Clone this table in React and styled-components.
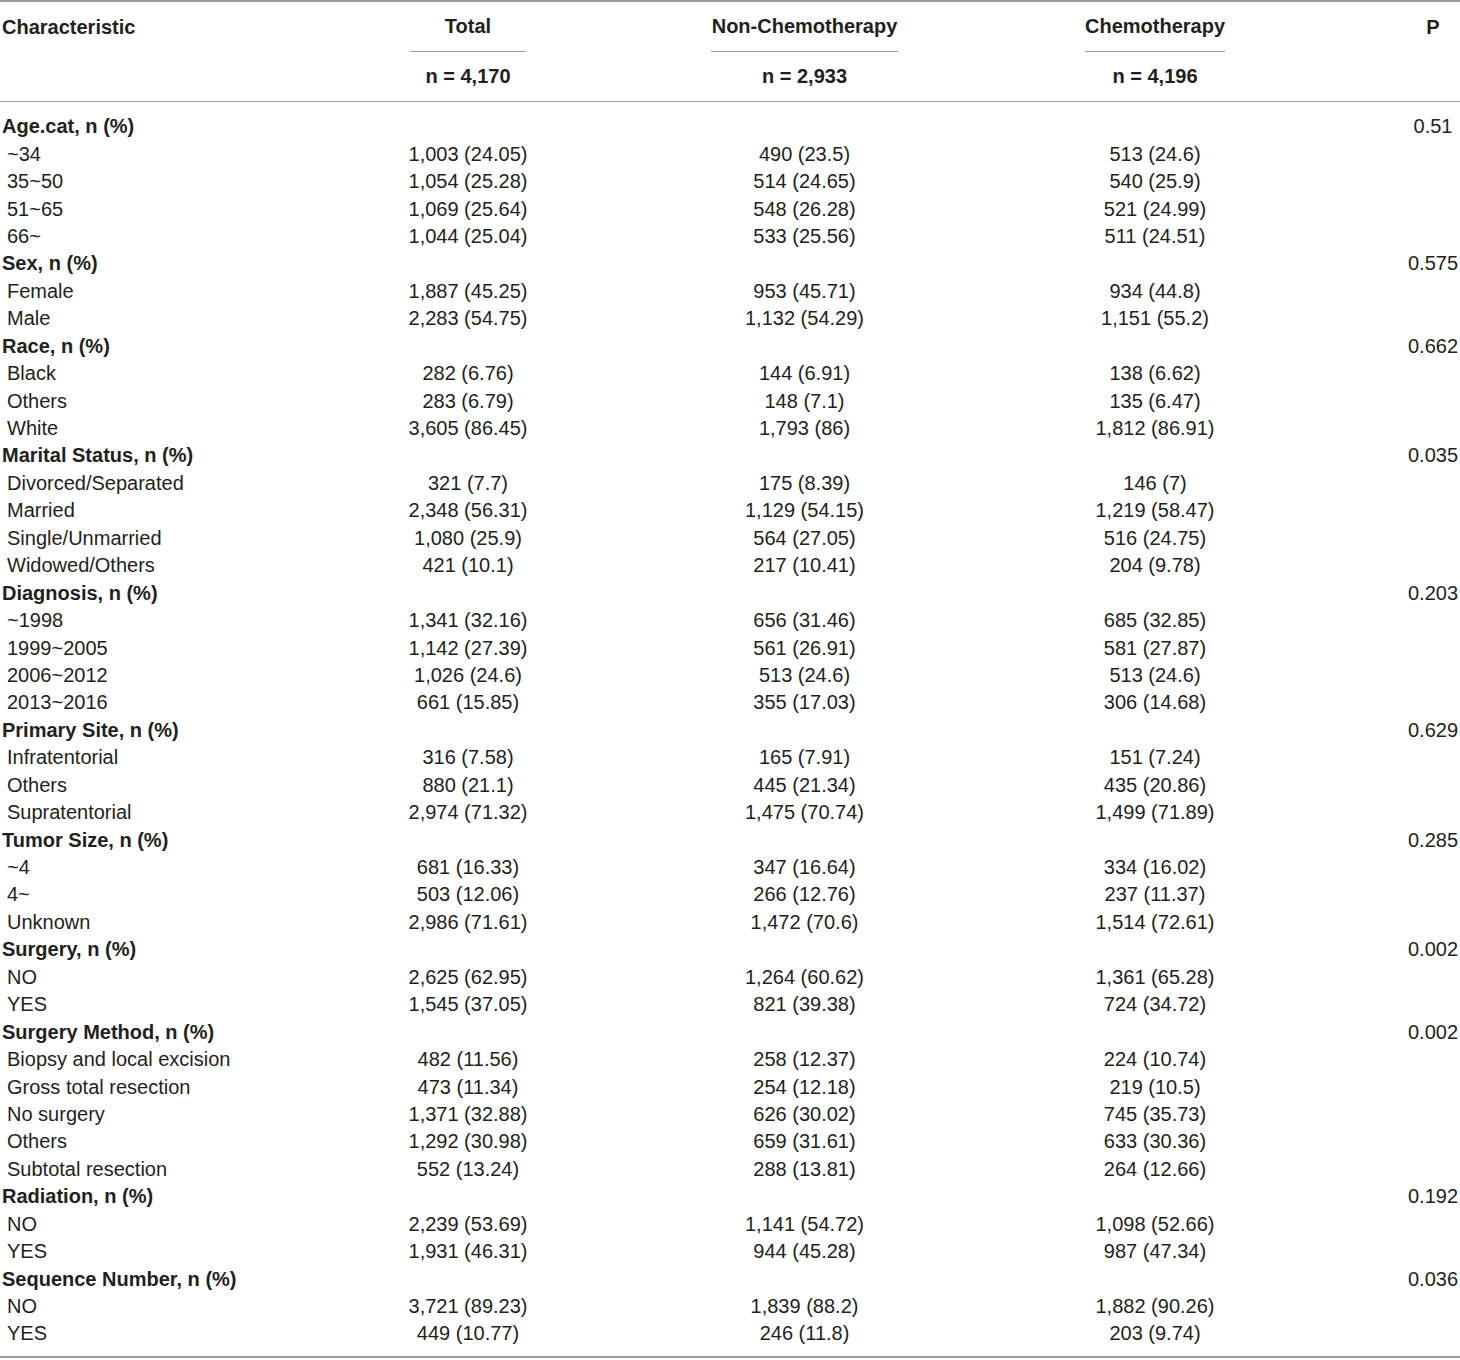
import React from "react";
import styled, { createGlobalStyle } from "styled-components";

const GlobalStyle = createGlobalStyle`
  html, body {
    margin: 0;
    padding: 0;
    background: #ffffff;
  }
  body {
    font-family: "Liberation Sans", Arial, Helvetica, sans-serif;
    color: #231f20;
  }
`;

const COLS = "410px 116px 185px 187px 187px 140px 181px 54px";

const Table = styled.div`
  width: 1460px;
  border-top: 2px solid #9a9a9a;
  border-bottom: 2px solid #9a9a9a;
  font-size: 20px;
`;

const Head = styled.div`
  border-bottom: 1.5px solid #a3a3a3;
`;

const HeadRow = styled.div`
  display: grid;
  grid-template-columns: ${COLS};
  align-items: center;
  height: ${(p) => p.$h}px;
  font-weight: bold;
`;

const HeadCell = styled.div`
  grid-column: ${(p) => p.$col};
  padding-left: ${(p) => (p.$left ? "2px" : "0")};
  align-self: stretch;
  display: flex;
  align-items: center;
  justify-content: ${(p) => (p.$left ? "flex-start" : "center")};
  border-bottom: ${(p) => (p.$rule ? "1.5px solid #9e9e9e" : "none")};
  white-space: nowrap;
`;

const Body = styled.div`
  padding: 11px 0 8px;
`;

const Row = styled.div`
  display: grid;
  grid-template-columns: ${COLS};
  align-items: center;
  height: 27.45px;
  white-space: nowrap;
`;

const Label = styled.div`
  grid-column: 1 / 2;
  padding-left: ${(p) => (p.$group ? "2px" : "7px")};
  font-weight: ${(p) => (p.$group ? "bold" : "normal")};
`;

const Num = styled.div`
  grid-column: ${(p) => p.$col};
  display: flex;
  justify-content: center;
`;

const groups = [
  { name: "Age.cat, n (%)", p: "0.51", rows: [
    ["~34", "1,003 (24.05)", "490 (23.5)", "513 (24.6)"],
    ["35~50", "1,054 (25.28)", "514 (24.65)", "540 (25.9)"],
    ["51~65", "1,069 (25.64)", "548 (26.28)", "521 (24.99)"],
    ["66~", "1,044 (25.04)", "533 (25.56)", "511 (24.51)"],
  ] },
  { name: "Sex, n (%)", p: "0.575", rows: [
    ["Female", "1,887 (45.25)", "953 (45.71)", "934 (44.8)"],
    ["Male", "2,283 (54.75)", "1,132 (54.29)", "1,151 (55.2)"],
  ] },
  { name: "Race, n (%)", p: "0.662", rows: [
    ["Black", "282 (6.76)", "144 (6.91)", "138 (6.62)"],
    ["Others", "283 (6.79)", "148 (7.1)", "135 (6.47)"],
    ["White", "3,605 (86.45)", "1,793 (86)", "1,812 (86.91)"],
  ] },
  { name: "Marital Status, n (%)", p: "0.035", rows: [
    ["Divorced/Separated", "321 (7.7)", "175 (8.39)", "146 (7)"],
    ["Married", "2,348 (56.31)", "1,129 (54.15)", "1,219 (58.47)"],
    ["Single/Unmarried", "1,080 (25.9)", "564 (27.05)", "516 (24.75)"],
    ["Widowed/Others", "421 (10.1)", "217 (10.41)", "204 (9.78)"],
  ] },
  { name: "Diagnosis, n (%)", p: "0.203", rows: [
    ["~1998", "1,341 (32.16)", "656 (31.46)", "685 (32.85)"],
    ["1999~2005", "1,142 (27.39)", "561 (26.91)", "581 (27.87)"],
    ["2006~2012", "1,026 (24.6)", "513 (24.6)", "513 (24.6)"],
    ["2013~2016", "661 (15.85)", "355 (17.03)", "306 (14.68)"],
  ] },
  { name: "Primary Site, n (%)", p: "0.629", rows: [
    ["Infratentorial", "316 (7.58)", "165 (7.91)", "151 (7.24)"],
    ["Others", "880 (21.1)", "445 (21.34)", "435 (20.86)"],
    ["Supratentorial", "2,974 (71.32)", "1,475 (70.74)", "1,499 (71.89)"],
  ] },
  { name: "Tumor Size, n (%)", p: "0.285", rows: [
    ["~4", "681 (16.33)", "347 (16.64)", "334 (16.02)"],
    ["4~", "503 (12.06)", "266 (12.76)", "237 (11.37)"],
    ["Unknown", "2,986 (71.61)", "1,472 (70.6)", "1,514 (72.61)"],
  ] },
  { name: "Surgery, n (%)", p: "0.002", rows: [
    ["NO", "2,625 (62.95)", "1,264 (60.62)", "1,361 (65.28)"],
    ["YES", "1,545 (37.05)", "821 (39.38)", "724 (34.72)"],
  ] },
  { name: "Surgery Method, n (%)", p: "0.002", rows: [
    ["Biopsy and local excision", "482 (11.56)", "258 (12.37)", "224 (10.74)"],
    ["Gross total resection", "473 (11.34)", "254 (12.18)", "219 (10.5)"],
    ["No surgery", "1,371 (32.88)", "626 (30.02)", "745 (35.73)"],
    ["Others", "1,292 (30.98)", "659 (31.61)", "633 (30.36)"],
    ["Subtotal resection", "552 (13.24)", "288 (13.81)", "264 (12.66)"],
  ] },
  { name: "Radiation, n (%)", p: "0.192", rows: [
    ["NO", "2,239 (53.69)", "1,141 (54.72)", "1,098 (52.66)"],
    ["YES", "1,931 (46.31)", "944 (45.28)", "987 (47.34)"],
  ] },
  { name: "Sequence Number, n (%)", p: "0.036", rows: [
    ["NO", "3,721 (89.23)", "1,839 (88.2)", "1,882 (90.26)"],
    ["YES", "449 (10.77)", "246 (11.8)", "203 (9.74)"],
  ] },
];

const App = () => {
  return (
    <>
      <GlobalStyle />
      <Table>
        <Head>
          <HeadRow $h={50}>
            <HeadCell $col="1 / 2" $left>Characteristic</HeadCell>
            <HeadCell $col="2 / 3" $rule>Total</HeadCell>
            <HeadCell $col="4 / 5" $rule>Non-Chemotherapy</HeadCell>
            <HeadCell $col="6 / 7" $rule>Chemotherapy</HeadCell>
            <HeadCell $col="8 / 9">P</HeadCell>
          </HeadRow>
          <HeadRow $h={49}>
            <HeadCell $col="2 / 3">n = 4,170</HeadCell>
            <HeadCell $col="4 / 5">n = 2,933</HeadCell>
            <HeadCell $col="6 / 7">n = 4,196</HeadCell>
          </HeadRow>
        </Head>
        <Body>
          {groups.map((g) => (
            <React.Fragment key={g.name}>
              <Row>
                <Label $group>{g.name}</Label>
                <Num $col="8 / 9">{g.p}</Num>
              </Row>
              {g.rows.map((r, i) => (
                <Row key={g.name + i}>
                  <Label>{r[0]}</Label>
                  <Num $col="2 / 3">{r[1]}</Num>
                  <Num $col="4 / 5">{r[2]}</Num>
                  <Num $col="6 / 7">{r[3]}</Num>
                </Row>
              ))}
            </React.Fragment>
          ))}
        </Body>
      </Table>
    </>
  );
};

export default App;
